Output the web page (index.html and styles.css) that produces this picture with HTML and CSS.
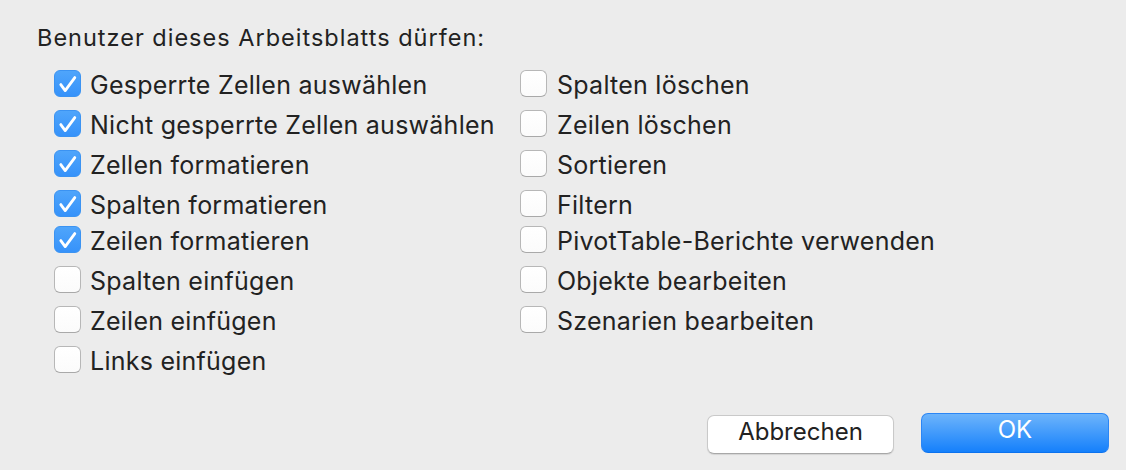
FILE: index.html
```html
<!DOCTYPE html>
<html lang="de">
<head>
<meta charset="utf-8">
<title>Blatt schützen</title>
<link rel="stylesheet" href="styles.css">
</head>
<body>
<div class="dialog">
  <div class="title">Benutzer dieses Arbeitsblatts dürfen:</div>
  <div class="columns">
    <div class="col col-left">
      <label class="item"><span class="box checked"><svg viewBox="0 0 27 27"><path d="M6.8 14.6 L11.2 20.6 L20.8 7.6"/></svg></span><span class="label">Gesperrte Zellen auswählen</span></label>
      <label class="item"><span class="box checked"><svg viewBox="0 0 27 27"><path d="M6.8 14.6 L11.2 20.6 L20.8 7.6"/></svg></span><span class="label">Nicht gesperrte Zellen auswählen</span></label>
      <label class="item"><span class="box checked"><svg viewBox="0 0 27 27"><path d="M6.8 14.6 L11.2 20.6 L20.8 7.6"/></svg></span><span class="label">Zellen formatieren</span></label>
      <label class="item"><span class="box checked"><svg viewBox="0 0 27 27"><path d="M6.8 14.6 L11.2 20.6 L20.8 7.6"/></svg></span><span class="label">Spalten formatieren</span></label>
      <label class="item tight"><span class="box checked"><svg viewBox="0 0 27 27"><path d="M6.8 14.6 L11.2 20.6 L20.8 7.6"/></svg></span><span class="label">Zeilen formatieren</span></label>
      <label class="item"><span class="box"></span><span class="label">Spalten einfügen</span></label>
      <label class="item"><span class="box"></span><span class="label">Zeilen einfügen</span></label>
      <label class="item"><span class="box"></span><span class="label">Links einfügen</span></label>
    </div>
    <div class="col col-right">
      <label class="item"><span class="box"></span><span class="label">Spalten löschen</span></label>
      <label class="item"><span class="box"></span><span class="label">Zeilen löschen</span></label>
      <label class="item"><span class="box"></span><span class="label">Sortieren</span></label>
      <label class="item"><span class="box"></span><span class="label">Filtern</span></label>
      <label class="item tight"><span class="box"></span><span class="label">PivotTable-Berichte verwenden</span></label>
      <label class="item"><span class="box"></span><span class="label">Objekte bearbeiten</span></label>
      <label class="item"><span class="box"></span><span class="label">Szenarien bearbeiten</span></label>
    </div>
  </div>
  <div class="buttons">
    <button class="btn btn-cancel">Abbrechen</button>
    <button class="btn btn-ok">OK</button>
  </div>
</div>
</body>
</html>
```
FILE: styles.css
```css
html, body {
  margin: 0;
  padding: 0;
  background: #ececec;
}
body {
  font-family: Inter, "Liberation Sans", Arial, sans-serif;
  color: #222222;
  width: 1126px;
  height: 470px;
  overflow: hidden;
}
.dialog {
  display: flex;
  flex-direction: column;
  padding: 24px 17px 0 37px;
}
.title {
  font-size: 23.5px;
  letter-spacing: 1px;
  line-height: 28px;
  height: 28px;
  white-space: nowrap;
}
.columns {
  display: flex;
  margin-top: 18px;
  margin-left: 17px;
}
.col {
  display: flex;
  flex-direction: column;
}
.col-left {
  width: 466px;
}
.item {
  display: flex;
  align-items: flex-start;
  height: 27px;
  margin-bottom: 13px;
  font-size: 25px;
  letter-spacing: 0.25px;
}
.item.tight {
  margin-top: -4px;
}
.box {
  flex: none;
  position: relative;
  width: 27px;
  height: 27px;
  box-sizing: border-box;
  border-radius: 6px;
  background: linear-gradient(#ffffff, #fbfbfb);
  border: 1px solid #b7b7b7;
  border-bottom-color: #a9a9a9;
  margin-right: 9px;
}
.col-right .box {
  margin-right: 10px;
}
.box.checked {
  background: linear-gradient(#4fa5fb, #3692fa);
  border-color: #3b93f2;
}
.box svg {
  position: absolute;
  left: -1px;
  top: -1px;
  width: 27px;
  height: 27px;
}
.box svg path {
  fill: none;
  stroke: #ffffff;
  stroke-width: 2.8;
  stroke-linecap: round;
  stroke-linejoin: round;
}
.label {
  white-space: nowrap;
  line-height: 30px;
}
.buttons {
  display: flex;
  justify-content: flex-end;
  align-items: flex-start;
  gap: 27px;
  margin-top: 27px;
}
.btn {
  font-family: Inter, "Liberation Sans", Arial, sans-serif;
  font-size: 24px;
  box-sizing: border-box;
  border-radius: 7px;
  padding: 0;
  text-align: center;
}
.btn-cancel {
  width: 187px;
  height: 39px;
  margin-top: 2px;
  line-height: 32.5px;
  padding-bottom: 4.5px;
  background: #ffffff;
  color: #222222;
  border: 1px solid #c9c9c9;
  border-bottom-color: #a8a8a8;
  box-shadow: 0 1px 1px rgba(0,0,0,0.10);
}
.btn-ok {
  width: 188px;
  height: 40px;
  line-height: 32.5px;
  padding-bottom: 5.5px;
  color: #ffffff;
  border: 1px solid #2b86f5;
  border-bottom-color: #0c72ee;
  background: linear-gradient(#6db4fb, #1580fb);
}
```
